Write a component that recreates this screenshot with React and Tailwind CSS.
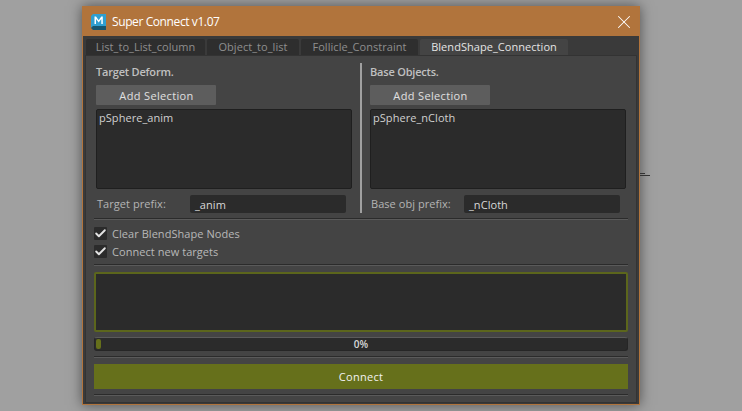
import React from 'react';
import { X, Check } from 'lucide-react';

const TABS = [
  { title: 'List_to_List_column', width: 'w-[119px]' },
  { title: 'Object_to_list', width: 'w-[92px]' },
  { title: 'Follicle_Constraint', width: 'w-[117px]' },
  { title: 'BlendShape_Connection', width: 'w-[148px]', active: true },
];

const Separator = () => <div className="h-[2px] bg-[#2b2b2b] border-b border-[#5a5a5a] mx-[8px]" />;

const Column = ({ heading, item, label, value }) => (
  <div className="w-[256px] flex flex-col">
    <p className="h-[22px] pt-[8px] leading-[15px] text-[11px] font-semibold tracking-[-0.2px] text-[#c0c0c0]">{heading}</p>
    <button type="button" className="mt-[7px] w-[120px] h-[20px] pt-[2px] pl-[1px] bg-[#5d5d5d] text-[#e0e0e0] text-[11px] tracking-[0.35px] rounded-[1px]">
      Add Selection
    </button>
    <div className="mt-[4px] h-[80px] bg-[#2b2b2b] border border-[#1f1f1f] rounded-[2px] px-[2px] py-0 text-[11px] leading-[16px] text-[#d0d0d0]">
      {item}
    </div>
    <div className="mt-[6px] flex items-center h-[18px]">
      <span className="w-[94px] pl-[1px] text-[11px] text-[#b4b4b4]">{label}</span>
      <div className="w-[156px] h-[18px] bg-[#2b2b2b] rounded-[2px] pl-[5px] text-[11px] leading-[19px] text-[#d8d8d8]">{value}</div>
    </div>
  </div>
);

const CheckRow = ({ text }) => (
  <div className="flex items-center gap-[5px] h-[13px]">
    <div className="w-[13px] h-[13px] bg-[#2b2b2b] rounded-[1px] flex items-center justify-center">
      <Check size={13} strokeWidth={3.5} className="text-[#e4e4e4]" />
    </div>
    <span className="pt-[2px] text-[11px] text-[#b8b8b8]">{text}</span>
  </div>
);

export default function App() {
  return (
    <div className="relative w-[742px] h-[411px] overflow-hidden pt-[6px] bg-[#a0a0a0] font-['Open_Sans',sans-serif] tracking-[0.05px]">
      <div className="ml-[82px] w-[558px] h-[399px] flex flex-col border border-[#b1743c] bg-[#444444] shadow-[0_0_12px_rgba(0,0,0,0.5)]">
        <div className="h-[29px] shrink-0 flex items-center justify-between bg-[#b1743c] pl-[8px] pr-[4px]">
          <div className="flex items-center gap-[6px]">
            <svg width="15" height="16" viewBox="0 0 15 16">
              <path d="M0 2 L2 0 H15 V12 H2 L0 14 Z" fill="#2f9fd0" />
              <path d="M0 14 L2 12 H15 V16 H2 Z" fill="#17566f" />
              <path d="M3.5 10 V2.5 H5 L7.7 6.2 L10.3 2.5 H11.8 V10 H10.3 V5 L7.7 8.5 L5 5 V10 Z" fill="#fff" />
            </svg>
            <span className="text-[12px] text-white tracking-[-0.4px]">Super Connect v1.07</span>
          </div>
          <X size={22} strokeWidth={1.1} className="text-white" />
        </div>

        <div className="flex-1 flex flex-col bg-[#3a3a3a] px-[2px] pb-[1px]">
          <div className="flex gap-[2px] pl-[1px] pt-[3px] h-[19px] shrink-0">
            {TABS.map((tab) => (
              <div
                key={tab.title}
                className={`${tab.width} h-[16px] rounded-t-[2px] text-center text-[11px] leading-[15px] ${tab.active ? 'bg-[#444444] text-[#e4e4e4]' : 'bg-[#2e2e2e] text-[#8e8e8e]'}`}
              >
                {tab.title}
              </div>
            ))}
          </div>

          <div className="flex-1 flex flex-col bg-[#444444] border border-[#333333]">
            <div className="flex pl-[10px] h-[157px]">
              <Column heading="Target Deform." item="pSphere_anim" label="Target prefix:" value="_anim" />
              <div className="mx-[8px] mt-[7px] w-[2px] h-[150px] bg-[#a0a0a0]" />
              <Column heading="Base Objects." item="pSphere_nCloth" label="Base obj prefix:" value="_nCloth" />
            </div>
            <div className="mt-[5px]"><Separator /></div>
            <div className="flex flex-col gap-[5px] pl-[8px] mt-[7px] h-[37px]">
              <CheckRow text="Clear BlendShape Nodes" />
              <CheckRow text="Connect new targets" />
            </div>
            <Separator />
            <div className="mx-[8px] mt-[6px] h-[60px] bg-[#2b2b2b] border-2 border-[#5c661c] rounded-[2px]" />
            <div className="mx-[8px] mt-[5px] h-[14px] flex items-center relative bg-[#2b2b2b] border border-t-[#5a5a5a] border-x-[#262626] border-b-[#262626] rounded-[3px] text-[10px] font-semibold text-[#d8d8d8]">
              <div className="absolute left-[1px] top-[1px] w-[5px] h-[10px] bg-[#66701b] rounded-[2px]" />
              <span className="w-full text-center">0%</span>
            </div>
            <div className="mt-[5px]"><Separator /></div>
            <button type="button" className="mx-[8px] mt-[6px] h-[25px] pt-[2px] bg-[#66701b] text-[11px] tracking-[0.3px] text-[#f2f2f2]">
              Connect
            </button>
            <div className="mt-[5px]"><Separator /></div>
          </div>
        </div>
      </div>
      <svg className="absolute left-[640px] top-[172px]" width="11" height="5" viewBox="0 0 11 5">
        <path d="M0 1.5 H5 M0 3.5 H10" stroke="#333333" strokeWidth="1" />
      </svg>
    </div>
  );
}
